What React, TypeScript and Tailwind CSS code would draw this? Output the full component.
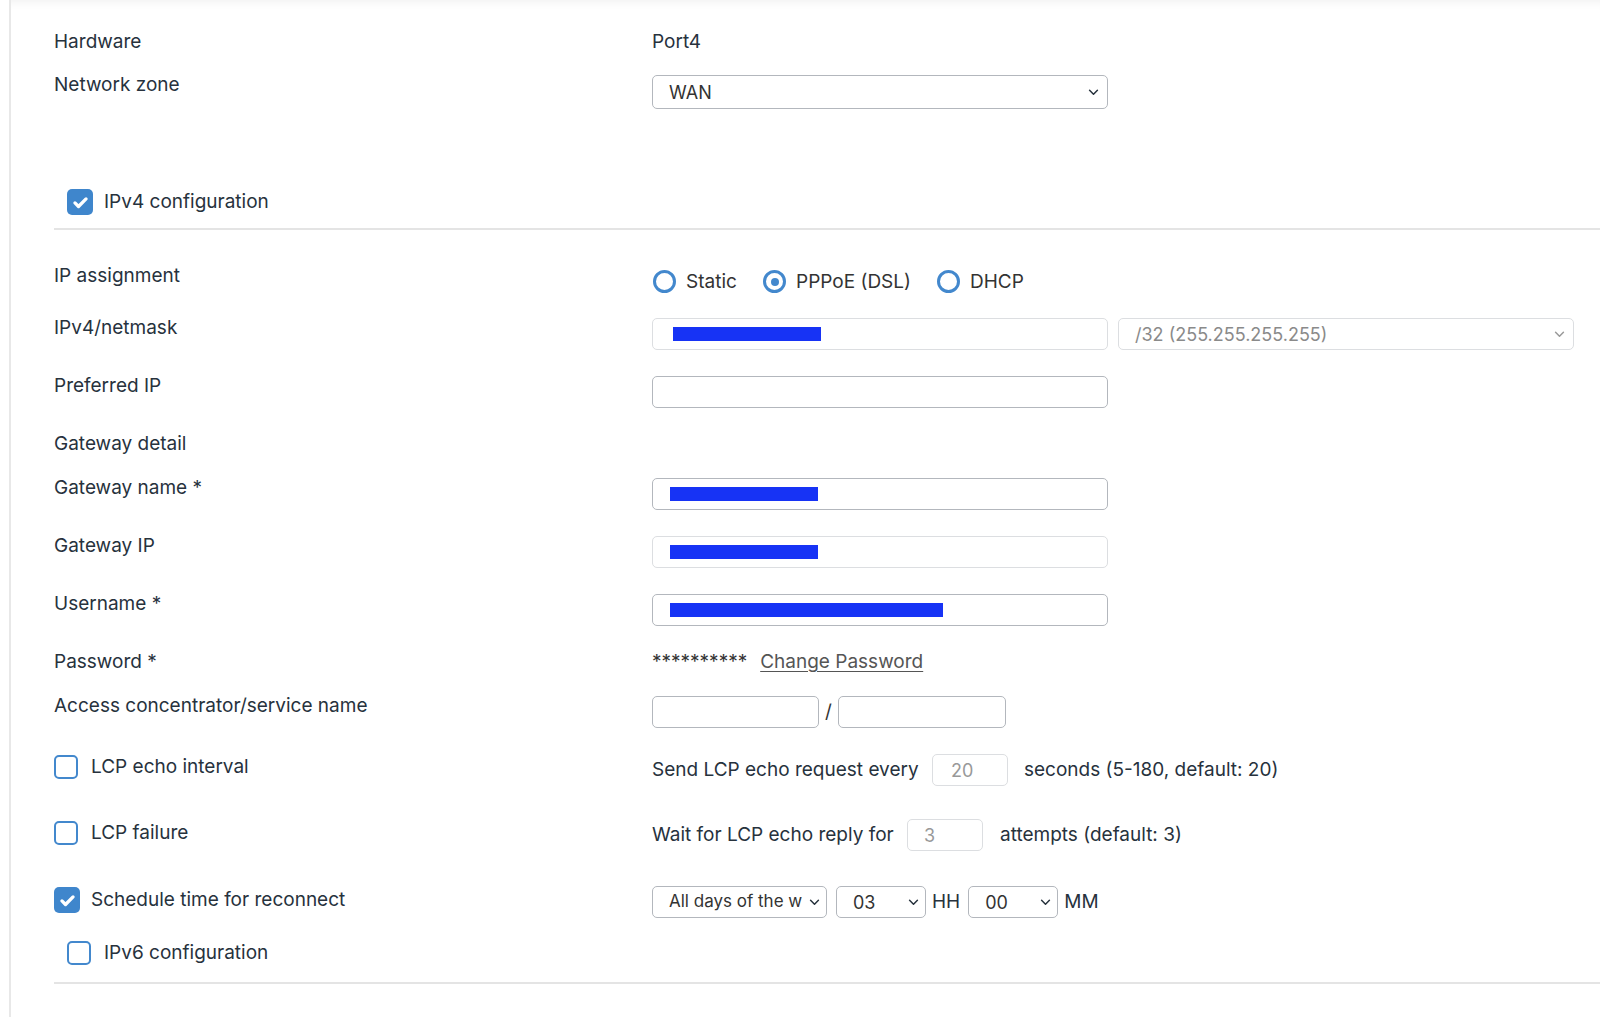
import React from "react";

const LABEL = "text-[19px] leading-[18px] text-[#27323d]";

function Chevron({ light }: { light?: boolean }) {
  return (
    <svg viewBox="0 0 12 8" className="h-[7px] w-[11px] shrink-0" fill="none" stroke={light ? "#9a9a9a" : "#27323d"} strokeWidth="1.7" strokeLinecap="round" strokeLinejoin="round">
      <path d="M1.5 1.5L6 6l4.5-4.5" />
    </svg>
  );
}

function Checkbox({ checked }: { checked?: boolean }) {
  return checked ? (
    <span className="flex h-[26px] w-[26px] shrink-0 items-center justify-center rounded-[5px] bg-[#3f86cc]">
      <svg viewBox="0 0 24 24" className="h-[19px] w-[19px]" fill="none" stroke="white" strokeWidth="4.2" strokeLinecap="round" strokeLinejoin="round">
        <path d="M5 12.5l4.5 4.5L19 7.5" />
      </svg>
    </span>
  ) : (
    <span className="block h-[24px] w-[24px] shrink-0 rounded-[5px] border-2 border-[#4388cd] bg-white" />
  );
}

function Radio({ selected, label, w }: { selected?: boolean; label: string; w?: string }) {
  return (
    <div className={`flex items-center gap-[10px] ${w ?? ""}`}>
      <span className="flex h-[23px] w-[23px] shrink-0 items-center justify-center rounded-full border-[3px] border-[#4388cd]">
        {selected && <span className="h-[8px] w-[8px] rounded-full bg-[#4388cd]" />}
      </span>
      <span className="text-[19px] leading-[18px] text-[#333]">{label}</span>
    </div>
  );
}

function Input({ bar, light, className = "" }: { bar?: number; light?: boolean; className?: string }) {
  return (
    <div className={`flex h-[32px] items-center rounded-[5px] border-[1.5px] bg-white pl-[17px] ${light ? "border-[#dcdee1]" : "border-[#b3b7bd]"} ${className}`}>
      {bar ? <span className="h-[14px] bg-[#1733f5]" style={{ width: bar }} /> : null}
    </div>
  );
}

function Select({ value, className = "", light, h = "h-[32px]", text = "text-[18px]" }: { value: string; className?: string; light?: boolean; h?: string; text?: string }) {
  return (
    <div className={`flex ${h} items-center justify-between overflow-hidden rounded-[5px] border-[1.5px] bg-white pl-[16px] ${light ? "border-[#dcdee1]" : "border-[#b3b7bd]"} ${className}`}>
      <span className={`whitespace-nowrap ${text} ${light ? "text-[#8a8a8a]" : "text-[#333]"}`}>{value}</span>
      <Chevron light={light} />
    </div>
  );
}

function Row({ label, h, children }: { label?: React.ReactNode; h: string; children?: React.ReactNode }) {
  return (
    <div className={`flex items-start ${h}`}>
      <div className={`w-[598px] shrink-0 pt-[1px] ${LABEL}`}>{label}</div>
      <div className="flex-1">{children}</div>
    </div>
  );
}

export default function App() {
  return (
    <div className="flex h-[1017px] w-[1600px] overflow-hidden bg-white font-[Inter,'Noto_Sans',sans-serif]">
      <div className="w-[9px] shrink-0" />
      <div className="flex-1 border-l-2 border-[#e8e8e8] pl-[43px] pt-[32px] shadow-[inset_0_10px_10px_-8px_rgba(0,0,0,0.06)]">
        <Row label="Hardware" h="h-[43px]">
          <div className={`pt-[1px] ${LABEL}`}>Port4</div>
        </Row>
        <Row label="Network zone" h="h-[114px]">
          <Select value="WAN" className="w-[456px] pr-[8px]" h="h-[34px]" />
        </Row>
        <div className="flex h-[39px] items-start pl-[13px]">
          <div className="flex items-center gap-[11px]">
            <Checkbox checked />
            <span className={LABEL}>IPv4 configuration</span>
          </div>
        </div>
        <div className="mb-[36px] h-[2px] bg-[#e4e4e4]" />
        <Row label="IP assignment" h="h-[52px]">
          <div className="ml-[1px] mt-[4px] flex items-center">
            <Radio label="Static" w="w-[110px]" />
            <Radio label="PPPoE (DSL)" selected w="w-[174px]" />
            <Radio label="DHCP" />
          </div>
        </Row>
        <Row label="IPv4/netmask" h="h-[58px]">
          <div className="flex gap-[10px]">
            <Input bar={148} light className="w-[456px] pl-[20px]" />
            <Select value="/32 (255.255.255.255)" light className="w-[456px] pr-[8px]" />
          </div>
        </Row>
        <Row label="Preferred IP" h="h-[58px]">
          <Input className="w-[456px]" />
        </Row>
        <Row label="Gateway detail" h="h-[44px]" />
        <Row label="Gateway name *" h="h-[58px]">
          <Input bar={148} className="w-[456px]" />
        </Row>
        <Row label="Gateway IP" h="h-[58px]">
          <Input bar={148} light className="w-[456px]" />
        </Row>
        <Row label="Username *" h="h-[58px]">
          <Input bar={273} className="w-[456px]" />
        </Row>
        <Row label="Password *" h="h-[44px]">
          <div className="flex items-center gap-[13px] pt-[1px] text-[19px] leading-[18px]">
            <span className="text-[#333]">**********</span>
            <span className="text-[#555] underline underline-offset-[3px]">Change Password</span>
          </div>
        </Row>
        <Row label="Access concentrator/service name" h="h-[58px]">
          <div className="flex items-center">
            <Input className="w-[167px]" />
            <span className="w-[19px] text-center text-[19px] text-[#333]">/</span>
            <Input className="w-[168px]" />
          </div>
        </Row>
        <div className="flex h-[65px] items-start">
          <div className="mt-[1px] flex w-[598px] shrink-0 items-center gap-[13px]">
            <Checkbox />
            <span className={LABEL}>LCP echo interval</span>
          </div>
          <div className="flex h-[32px] items-center">
            <span className={`${LABEL} w-[280px]`}>Send LCP echo request every</span>
            <div className="flex h-[32px] w-[76px] items-center rounded-[5px] border-[1.5px] border-[#dcdee1] pl-[18px] text-[18px] text-[#999]">20</div>
            <span className={`${LABEL} ml-[16px]`}>seconds (5-180, default: 20)</span>
          </div>
        </div>
        <div className="flex h-[67px] items-start">
          <div className="mt-[2px] flex w-[598px] shrink-0 items-center gap-[13px]">
            <Checkbox />
            <span className={LABEL}>LCP failure</span>
          </div>
          <div className="flex h-[32px] items-center">
            <span className={`${LABEL} w-[255px]`}>Wait for LCP echo reply for</span>
            <div className="flex h-[32px] w-[76px] items-center rounded-[5px] border-[1.5px] border-[#dcdee1] pl-[16px] text-[18px] text-[#999]">3</div>
            <span className={`${LABEL} ml-[17px]`}>attempts (default: 3)</span>
          </div>
        </div>
        <div className="flex h-[55px] items-start">
          <div className="mt-[1px] flex w-[598px] shrink-0 items-center gap-[11px]">
            <Checkbox checked />
            <span className={LABEL}>Schedule time for reconnect</span>
          </div>
          <div className="flex items-center">
            <Select value="All days of the w" text="text-[17px]" className="w-[175px] pl-[15px] pr-[6px]" />
            <Select value="03" className="ml-[9px] w-[90px] pr-[6px]" />
            <span className={`${LABEL} ml-[6px]`}>HH</span>
            <Select value="00" className="ml-[8px] w-[90px] pr-[6px]" />
            <span className={`${LABEL} ml-[6px]`}>MM</span>
          </div>
        </div>
        <div className="flex h-[41px] items-start pl-[13px]">
          <div className="flex items-center gap-[13px]">
            <Checkbox />
            <span className={LABEL}>IPv6 configuration</span>
          </div>
        </div>
        <div className="h-[2px] bg-[#e4e4e4]" />
      </div>
    </div>
  );
}
